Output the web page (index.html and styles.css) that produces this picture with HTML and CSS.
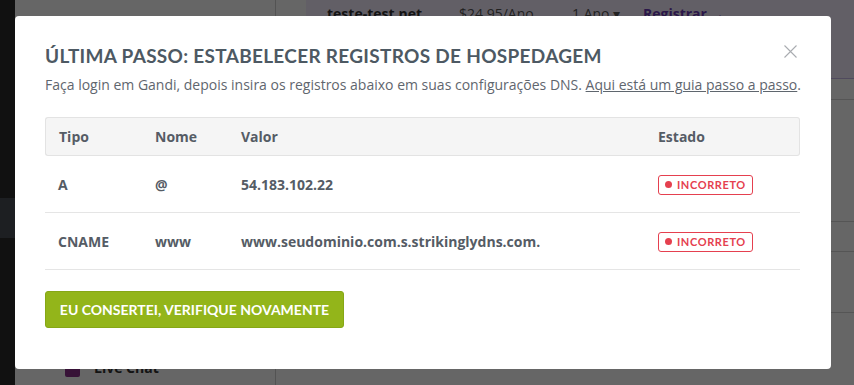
FILE: index.html
```html
<!DOCTYPE html>
<html lang="pt">
<head>
<meta charset="utf-8">
<title>Registros de hospedagem</title>
<link rel="stylesheet" href="styles.css">
</head>
<body>
<div class="app">
  <div class="rail">
    <div class="rail-item"></div>
  </div>
  <aside class="sidebar">
    <div class="side-spacer"></div>
    <div class="chat"><span class="chat-icon"></span><span>Live Chat</span></div>
  </aside>
  <main class="main">
    <div class="results">
      <div class="res-row res-active">
        <span class="dom">teste-test.net</span>
        <span class="price">$24.95/Ano</span>
        <span class="period">1 Ano ▾</span>
        <span class="reg">Registrar →</span>
      </div>
      <div class="res-row res-short"></div>
      <div class="res-row res-tall"></div>
      <div class="res-row res-mini"></div>
      <div class="res-row res-mid"></div>
    </div>
  </main>
</div>

<div class="overlay"></div>

<div class="modal" role="dialog">
  <button class="close" aria-label="Fechar">
    <svg width="13" height="13" viewBox="0 0 13 13"><path d="M0.5 0.5 L12.5 12.5 M12.5 0.5 L0.5 12.5" stroke="#a9acb0" stroke-width="1.1" fill="none"/></svg>
  </button>
  <h2 class="title">ÚLTIMA PASSO: ESTABELECER REGISTROS DE HOSPEDAGEM</h2>
  <p class="sub">Faça login em Gandi, depois insira os registros abaixo em suas configurações DNS. <a href="#">Aqui está um guia passo a passo</a>.</p>
  <table class="records">
    <colgroup>
      <col class="c1"><col class="c2"><col class="c3"><col class="c4">
    </colgroup>
    <thead>
      <tr><th>Tipo</th><th>Nome</th><th>Valor</th><th>Estado</th></tr>
    </thead>
    <tbody>
      <tr><td>A</td><td>@</td><td>54.183.102.22</td><td><span class="badge"><i class="dot"></i>INCORRETO</span></td></tr>
      <tr><td>CNAME</td><td>www</td><td>www.seudominio.com.s.strikinglydns.com.</td><td><span class="badge"><i class="dot"></i>INCORRETO</span></td></tr>
    </tbody>
  </table>
  <button class="verify">EU CONSERTEI, VERIFIQUE NOVAMENTE</button>
</div>
</body>
</html>
```
FILE: styles.css
```css
* { box-sizing: border-box; }
html, body { margin: 0; padding: 0; }
body {
  width: 854px;
  height: 385px;
  overflow: hidden;
  font-family: "Open Sans", sans-serif;
  background: #fff;
}
.app {
  display: flex;
  height: 385px;
}
.rail {
  width: 15px;
  background: #2b2b2b;
  padding-top: 198px;
}
.rail-item {
  height: 40px;
  background: #4a4e56;
}
.sidebar {
  width: 261px;
  background: #fff;
  border-right: 1px solid #cfcfcf;
  display: flex;
  flex-direction: column;
}
.side-spacer { flex: 1; }
.chat {
  display: flex;
  align-items: center;
  gap: 14px;
  padding: 0 0 0 50px;
  height: 16px;
  margin-bottom: 10px;
  font-size: 14px;
  font-weight: 700;
  color: #333;
}
.chat-icon {
  width: 15px;
  height: 13px;
  margin-top: 6px;
  background: #8a2e8a;
  border-radius: 2px;
}
.main {
  flex: 1;
  padding-left: 30px;
  background: #fff;
}
.results { display: flex; flex-direction: column; }
.res-row {
  border-bottom: 1px solid #d4d4d4;
}
.res-active {
  height: 79px;
  background: #f6eeff;
  border-bottom: 1px solid #c8b8e8;
  display: flex;
  align-items: flex-start;
  padding: 4px 0 0 21px;
  font-size: 14px;
  color: #333;
}
.res-active .dom { font-weight: 700; width: 132px; }
.res-active .price { width: 113px; color: #555; }
.res-active .period { width: 71px; color: #555; }
.res-active .reg { font-weight: 700; color: #6a3ab6; }
.res-short { height: 21px; }
.res-tall { height: 122px; }
.res-mini { height: 30px; }
.res-mid { height: 61px; }

.overlay {
  position: fixed;
  inset: 0;
  background: rgba(0, 0, 0, 0.6);
}

.modal {
  position: fixed;
  left: 15px;
  top: 16px;
  width: 816px;
  height: 353px;
  background: #fff;
  border-radius: 4px;
  padding: 26px 30px 0 30px;
}
.close {
  position: absolute;
  top: 29px;
  right: 34px;
  padding: 0;
  border: 0;
  background: none;
  line-height: 0;
}
.title {
  margin: 0;
  font-family: "Lato", sans-serif;
  font-weight: 700;
  font-size: 19px;
  line-height: 28px;
  letter-spacing: 0.3px;
  color: #4d5963;
}
.sub {
  margin: 5px 0 0;
  font-size: 14px;
  line-height: 20px;
  color: #5f666e;
}
.sub a { color: #5f666e; text-decoration: underline; }

.records {
  margin-top: 22px;
  width: 755px;
  border-collapse: separate;
  border-spacing: 0;
  table-layout: fixed;
  font-size: 14px;
  color: #555c65;
}
.c1 { width: 110px; }
.c2 { width: 86px; }
.c3 { width: 417px; }
.c4 { width: 142px; }
.records th {
  text-align: left;
  font-weight: 700;
  height: 39px;
  padding: 0 0 0 13px;
  background: #f5f5f5;
  border-top: 1px solid #e3e3e3;
  border-bottom: 1px solid #e3e3e3;
}
.records th:first-child { border-left: 1px solid #e3e3e3; border-radius: 3px 0 0 3px; }
.records th:last-child { border-right: 1px solid #e3e3e3; border-radius: 0 3px 3px 0; }
.records th + th, .records td + td { padding-left: 0; }
.records td {
  height: 57px;
  padding: 0 0 0 13px;
  font-weight: 700;
  border-bottom: 1px solid #e5e5e5;
}
.badge {
  display: inline-flex;
  align-items: center;
  gap: 5px;
  height: 20px;
  padding: 0 6px 0 6px;
  border: 1px solid #e5404f;
  border-radius: 3px;
  font-family: "Lato", sans-serif;
  font-size: 11px;
  font-weight: 700;
  letter-spacing: 0.6px;
  color: #e5404f;
}
.dot {
  width: 7px;
  height: 7px;
  border-radius: 50%;
  background: #e5404f;
}
.verify {
  display: block;
  margin-top: 21px;
  width: 299px;
  height: 37px;
  border: 1px solid #86a716;
  border-radius: 3px;
  background: #93b51a;
  color: #fff;
  font-family: "Lato", sans-serif;
  font-weight: 700;
  font-size: 14px;
  padding: 0;
  cursor: pointer;
}
```
